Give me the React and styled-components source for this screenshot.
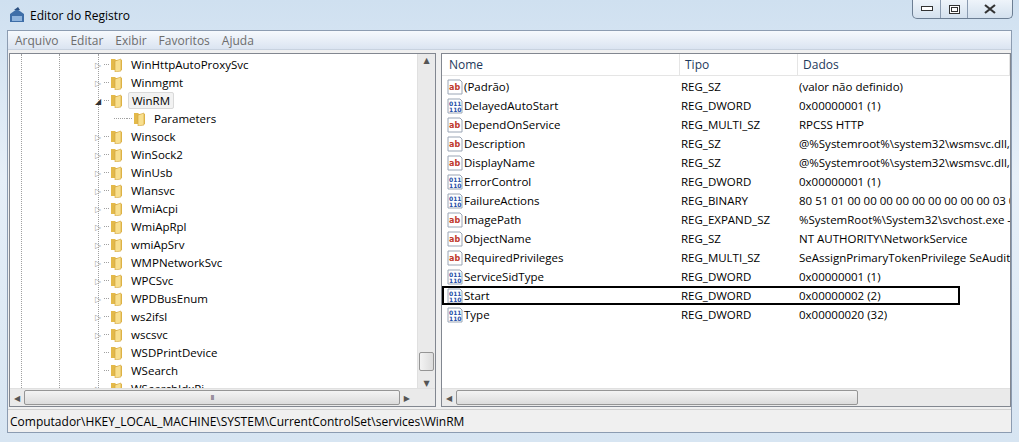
import React from "react";
import styled, { createGlobalStyle } from "styled-components";

const Global = createGlobalStyle`
  html, body { margin: 0; padding: 0; }
  body { font-family: "Segoe UI", "Open Sans", "DejaVu Sans", sans-serif; font-size: 11.5px; }
`;

const Window = styled.div`
  width: 1019px; height: 442px; box-sizing: border-box;
  background: linear-gradient(180deg, #cfe0f0 0%, #e6eff8 40%, #d7e5f2 100%);
  display: flex; flex-direction: column; overflow: hidden; position: relative;
`;
const TitleBar = styled.div`
  height: 30px; flex: none; display: flex; align-items: center; padding-left: 8px; gap: 4px;
  font-size: 12px; color: #000;
`;
const Controls = styled.div`
  position: absolute; top: 0; right: 6px; display: flex;
  border: 1px solid #6c7e93; border-top: none; border-radius: 0 0 5px 5px; overflow: hidden;
  background: linear-gradient(#eef4fa, #d4e1ee);
`;
const Ctl = styled.div`
  width: ${p => p.w}px; height: 18px; display: flex; align-items: center; justify-content: center;
  border-left: ${p => (p.first ? "none" : "1px solid #8a9bb0")};
`;
const Frame = styled.div`
  flex: 1; margin: 0 7px 9px 7px; border: 1px solid #8c9cb1; background: #f0f0f0;
  display: flex; flex-direction: column; min-height: 0;
`;
const MenuBar = styled.div`
  height: 18px; flex: none; display: flex; gap: 12px; padding-left: 7px; align-items: center;
  background: linear-gradient(#f6f9fd, #dbe4f1); color: #6d6d6d; font-size: 12px;
  border-bottom: 1px solid #c8d2df;
`;
const Panes = styled.div`
  flex: 1; display: flex; gap: 5px; padding: 3px 0 0 1px; min-height: 0;
`;
const Pane = styled.div`
  width: ${p => p.w}px; flex: ${p => (p.w ? "none" : 1)}; border: 1px solid #828790; background: #fff;
  display: flex; flex-direction: column; overflow: hidden; min-width: 0;
`;
const PaneBody = styled.div` flex: 1; display: flex; min-height: 0; `;
const TreeArea = styled.div` flex: 1; position: relative; padding-top: 1px; overflow: hidden; `;
const VLine = styled.div`
  position: absolute; top: 0; bottom: 0; left: ${p => p.x}px; border-left: 1px dotted #a0a0a0;
`;
const TreeRow = styled.div`
  height: 18px; display: flex; align-items: center; padding-left: ${p => p.indent}px; position: relative;
`;
const Expander = styled.span`
  width: 12px; font-size: 8px; color: ${p => (p.open ? "#333" : "#a0a0a0")}; text-align: center;
`;
const Dash = styled.span` width: ${p => p.w || 5}px; border-top: 1px dotted #a0a0a0; `;
const Label = styled.span`
  margin-left: 3px; padding: 0 3px; color: #000;
  ${p => p.sel && "border: 1px solid #d9d9d9; background: #f2f2f2; border-radius: 2px;"}
`;
const VScroll = styled.div`
  width: 17px; background: #eaeaea; border-left: 1px solid #e0e0e0; display: flex; flex-direction: column;
  align-items: center; font-size: 8px; color: #555;
`;
const Thumb = styled.div`
  width: 13px; height: 17px; margin-top: auto; margin-bottom: 6px; border: 1px solid #959595; border-radius: 2px;
  background: linear-gradient(90deg, #f3f3f3, #dcdcdc);
`;
const HScroll = styled.div`
  height: 17px; flex: none; background: #eaeaea; display: flex; align-items: center; font-size: 8px; color: #555;
  gap: 4px; padding: 0 4px; border-top: 1px solid #e0e0e0;
`;
const HThumb = styled.div`
  flex: ${p => (p.grow ? 1 : "none")}; width: ${p => p.w || 0}px; height: 13px; border: 1px solid #959595; border-radius: 2px;
  background: linear-gradient(#f3f3f3, #dcdcdc); display: flex; align-items: center; justify-content: center;
  font-size: 7px; letter-spacing: -1px;
`;
const Header = styled.div`
  height: 21px; flex: none; display: grid; grid-template-columns: 231px 118px 1fr; border-bottom: 1px solid #e5e5e5;
  padding-left: 7px; align-items: center; color: #1e395b; font-size: 12px;
`;
const HCell = styled.div` border-right: 1px solid #e5e5e5; height: 100%; display: flex; align-items: center; padding-left: ${p => p.pl || 0}px;`;
const Rows = styled.div` flex: 1; padding-top: 1px; overflow: hidden; `;
const Row = styled.div`
  height: 19px; display: grid; grid-template-columns: 231px 118px 1fr; align-items: center;
  padding-left: 5px; white-space: nowrap; position: relative;
  &::after {
    content: ""; position: absolute; left: 0; top: 0; bottom: 0; right: 50px;
    border: 2px solid #000; display: ${p => (p.hl ? "block" : "none")};
  }
`;
const NameCell = styled.div` display: flex; align-items: center; gap: 1px; `;
const Cell = styled.div` padding-left: ${p => p.pl || 0}px; `;
const Status = styled.div`
  height: 22px; flex: none; display: flex; align-items: center; padding-left: 2px; font-size: 12px; margin-top: 2px;
  border-top: 1px solid #d0d0d0;
`;

const Folder = () => (
  <svg width="16" height="16" viewBox="0 0 16 16">
    <path d="M2 3h4l1 1h6v10H2z" fill="#e3b94a" />
    <path d="M6 5l6-2v12l-6 1z" fill="#f8df8e" stroke="#d0a13a" strokeWidth="0.6" />
  </svg>
);
const AbIcon = () => (
  <svg width="16" height="16" viewBox="0 0 16 16">
    <path d="M1 1h12l2 2v12H1z" fill="#fff" stroke="#9aa5b5" />
    <text x="2" y="11" fontSize="8" fontWeight="bold" fill="#c0392b" fontFamily="DejaVu Sans">ab</text>
  </svg>
);
const BinIcon = () => (
  <svg width="16" height="16" viewBox="0 0 16 16">
    <path d="M1 1h12l2 2v12H1z" fill="#fff" stroke="#9aa5b5" />
    <text x="2" y="7.5" fontSize="6" fontWeight="bold" fill="#1f4fa8" fontFamily="DejaVu Sans">011</text>
    <text x="2" y="13.5" fontSize="6" fontWeight="bold" fill="#1f4fa8" fontFamily="DejaVu Sans">110</text>
  </svg>
);
const AppIcon = () => (
  <svg width="18" height="18" viewBox="0 0 18 18">
    <path d="M2 8l7-5 7 5v8H2z" fill="#3e6ea8" />
    <path d="M4 10h10v5H4z" fill="#8fb4dd" />
    <path d="M6 4l4-3 2 3z" fill="#2b4f80" />
  </svg>
);

const tree = [
  ["WinHttpAutoProxySvc", 1], ["Winmgmt", 1], ["WinRM", 2], ["Parameters", 3], ["Winsock", 1], ["WinSock2", 1],
  ["WinUsb", 1], ["Wlansvc", 1], ["WmiAcpi", 1], ["WmiApRpl", 1], ["wmiApSrv", 1], ["WMPNetworkSvc", 1],
  ["WPCSvc", 1], ["WPDBusEnum", 1], ["ws2ifsl", 1], ["wscsvc", 1], ["WSDPrintDevice", 0], ["WSearch", 0], ["WSearchIdxPi", 1],
];

const values = [
  ["(Padrão)", "ab", "REG_SZ", "(valor não definido)"],
  ["DelayedAutoStart", "bin", "REG_DWORD", "0x00000001 (1)"],
  ["DependOnService", "ab", "REG_MULTI_SZ", "RPCSS HTTP"],
  ["Description", "ab", "REG_SZ", "@%Systemroot%\\system32\\wsmsvc.dll,-102"],
  ["DisplayName", "ab", "REG_SZ", "@%Systemroot%\\system32\\wsmsvc.dll,-101"],
  ["ErrorControl", "bin", "REG_DWORD", "0x00000001 (1)"],
  ["FailureActions", "bin", "REG_BINARY", "80 51 01 00 00 00 00 00 00 00 00 00 03 00 00 00"],
  ["ImagePath", "ab", "REG_EXPAND_SZ", "%SystemRoot%\\System32\\svchost.exe -k NetworkService"],
  ["ObjectName", "ab", "REG_SZ", "NT AUTHORITY\\NetworkService"],
  ["RequiredPrivileges", "ab", "REG_MULTI_SZ", "SeAssignPrimaryTokenPrivilege SeAuditPrivilege"],
  ["ServiceSidType", "bin", "REG_DWORD", "0x00000001 (1)"],
  ["Start", "bin", "REG_DWORD", "0x00000002 (2)"],
  ["Type", "bin", "REG_DWORD", "0x00000020 (32)"],
];

export default function App() {
  return (
    <Window>
      <Global />
      <TitleBar><AppIcon />Editor do Registro</TitleBar>
      <Controls>
        <Ctl w={27} first><svg width="12" height="6"><rect x="0.5" y="0.5" width="11" height="4" fill="#fff" stroke="#333" /></svg></Ctl>
        <Ctl w={26}><svg width="11" height="9"><rect x="0.5" y="0.5" width="10" height="8" fill="#fff" stroke="#333" /><rect x="2.5" y="2.5" width="6" height="4" fill="none" stroke="#333" /></svg></Ctl>
        <Ctl w={44}><svg width="12" height="10"><path d="M1 1l10 8M11 1L1 9" stroke="#333" strokeWidth="2.2" /></svg></Ctl>
      </Controls>
      <Frame>
        <MenuBar>
          {["Arquivo", "Editar", "Exibir", "Favoritos", "Ajuda"].map(m => <span key={m}>{m}</span>)}
        </MenuBar>
        <Panes>
          <Pane w={425}>
            <PaneBody>
              <TreeArea>
                <VLine x={11} /><VLine x={49} /><VLine x={88} />
                {tree.map(([n, k]) => (
                  <TreeRow key={n} indent={k === 3 ? 104 : 82}>
                    {k === 3 ? <Dash w={13} /> : <Expander open={k === 2}>{k === 2 ? "◢" : k === 1 ? "▷" : ""}</Expander>}
                    <Dash />
                    <Folder />
                    <Label sel={k === 2}>{n}</Label>
                  </TreeRow>
                ))}
              </TreeArea>
              <VScroll>▲<Thumb />▼</VScroll>
            </PaneBody>
            <HScroll>◀<HThumb grow>III</HThumb>▶<span style={{ width: 17 }} /></HScroll>
          </Pane>
          <Pane>
            <Header>
              <HCell>Nome</HCell><HCell pl={5}>Tipo</HCell><HCell pl={5}>Dados</HCell>
            </Header>
            <Rows>
              {values.map(([n, ic, t, d]) => (
                <Row key={n} hl={n === "Start"}>
                  <NameCell>{ic === "ab" ? <AbIcon /> : <BinIcon />}{n}</NameCell>
                  <Cell pl={3}>{t}</Cell>
                  <Cell pl={3}>{d}</Cell>
                </Row>
              ))}
            </Rows>
            <HScroll>◀<HThumb w={400} /></HScroll>
          </Pane>
        </Panes>
        <Status>Computador\HKEY_LOCAL_MACHINE\SYSTEM\CurrentControlSet\services\WinRM</Status>
      </Frame>
    </Window>
  );
}
